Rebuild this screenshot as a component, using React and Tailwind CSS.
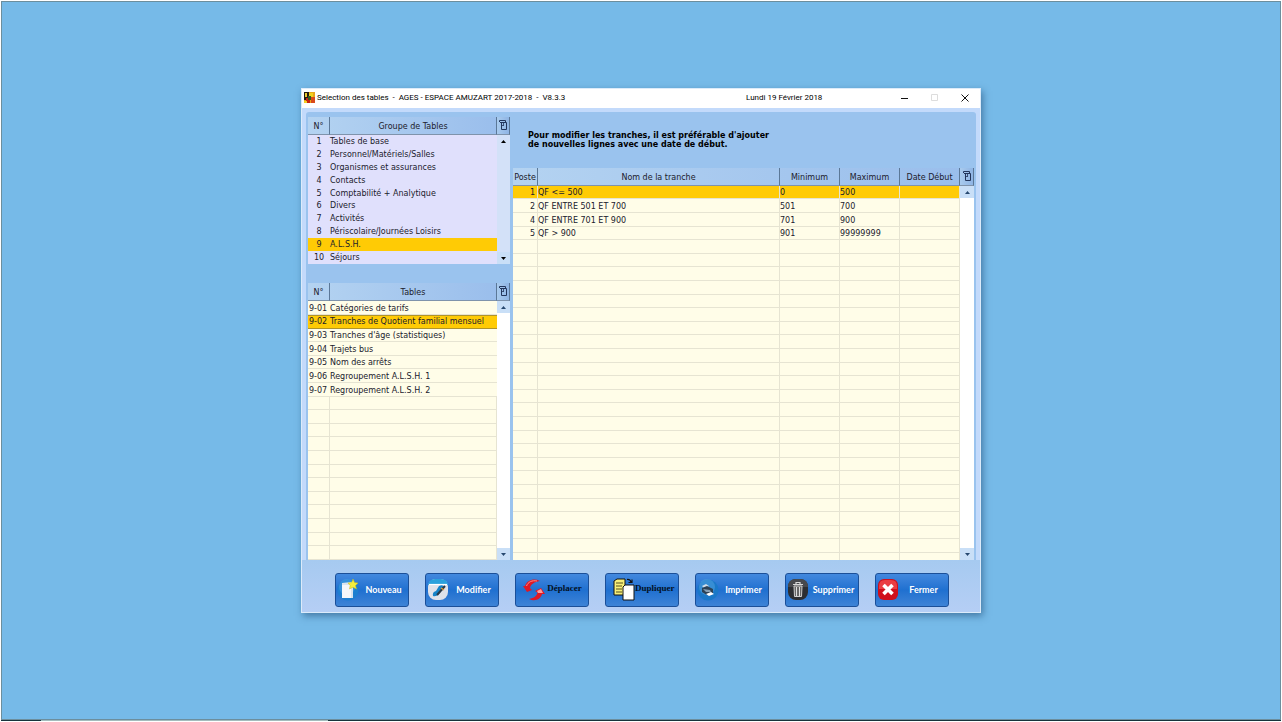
import React from "react";

const groups = [
  ["1", "Tables de base"],
  ["2", "Personnel/Matériels/Salles"],
  ["3", "Organismes et assurances"],
  ["4", "Contacts"],
  ["5", "Comptabilité + Analytique"],
  ["6", "Divers"],
  ["7", "Activités"],
  ["8", "Périscolaire/Journées Loisirs"],
  ["9", "A.L.S.H."],
  ["10", "Séjours"],
];

const tables = [
  ["9-01", "Catégories de tarifs"],
  ["9-02", "Tranches de Quotient familial mensuel"],
  ["9-03", "Tranches d'âge (statistiques)"],
  ["9-04", "Trajets bus"],
  ["9-05", "Nom des arrêts"],
  ["9-06", "Regroupement A.L.S.H. 1"],
  ["9-07", "Regroupement A.L.S.H. 2"],
];

const brackets = [
  ["1", "QF <= 500", "0", "500"],
  ["2", "QF ENTRE 501 ET 700", "501", "700"],
  ["4", "QF ENTRE 701 ET 900", "701", "900"],
  ["5", "QF > 900", "901", "99999999"],
];

const padRows = (rows, count) => [...rows, ...Array(count - rows.length).fill([])];

// Row heights cycle between 13 and 14 pixels.
const rowHeights = ["h-[13px]", "h-[14px]", "h-[14px]", "h-[13px]", "h-[14px]"];

const headRow = "h-[18px] bg-linear-to-r from-[#b4d3f1] to-[#9abeec]";
const headCell =
  "border-r border-r-[#5b7898] border-b border-b-[#7f93ab] p-0 pt-0.5 text-center font-normal";

function AppLogo() {
  return (
    <svg className="h-[11px] w-[11px]" viewBox="0 0 11 11" aria-hidden="true">
      <rect width="11" height="11" fill="#e8a51c" />
      <rect width="5" height="8" fill="#221a10" />
      <rect x="1" y="1" width="2" height="4" fill="#e8c832" />
      <rect x="5" y="1" width="4" height="5" fill="#f0d21e" />
      <rect x="2" y="6" width="4" height="5" fill="#c82414" />
      <rect x="7" y="5" width="4" height="6" fill="#d94a1a" />
      <rect x="4" y="4" width="3" height="4" fill="#3a5a20" />
      <rect y="9" width="3" height="2" fill="#f3cf24" />
    </svg>
  );
}

function ColumnsIcon() {
  return (
    <svg className="h-[11px] w-2" viewBox="0 0 8 11" fill="none" stroke="#23365c" aria-hidden="true">
      <path d="M.5 2V.5H6.5V2M1 2.5H7.5V9.5H2.5V2.5" />
      <path d="M4.5 3V5.5M3 5.5H5" strokeWidth=".8" />
    </svg>
  );
}

function Arrow({ down, dark }) {
  return (
    <button
      type="button"
      aria-label={down ? "Défiler vers le bas" : "Défiler vers le haut"}
      className={`flex h-3 w-full shrink-0 items-center justify-center ${dark && !down ? "" : "bg-[#c9dff7]"}`}
    >
      <svg className="h-[3px] w-[5px]" viewBox="0 0 5 3" aria-hidden="true">
        <path d={down ? "M0 0H5L2.5 3Z" : "M0 3H5L2.5 0Z"} fill={dark ? "#000" : "#27486f"} />
      </svg>
    </button>
  );
}

function ScrollRail({ width, tint }) {
  return (
    <div className={`flex shrink-0 flex-col ${width}`}>
      <button
        type="button"
        aria-label="Choisir les colonnes"
        className="flex h-[18px] shrink-0 items-center justify-center border-r border-b border-r-[#5b7898] border-b-[#7f93ab] bg-linear-to-r from-[#a9cbee] to-[#8fb4e4]"
      >
        <ColumnsIcon />
      </button>
      <div className={`flex grow flex-col justify-between ${tint ? "bg-[#d3e1f8]" : "bg-white"}`}>
        <Arrow dark={tint} />
        <Arrow down dark={tint} />
      </div>
    </div>
  );
}

function GroupTable() {
  return (
    <section className="flex bg-[#e0e0fc]">
      <table className="grow table-fixed border-separate border-spacing-0 leading-3">
        <colgroup>
          <col className="w-[22px]" />
          <col />
        </colgroup>
        <thead>
          <tr className={headRow}>
            <th className={headCell}>N°</th>
            <th className={headCell}>Groupe de Tables</th>
          </tr>
        </thead>
        <tbody>
          {groups.map(([id, name], i) => (
            <tr key={id} className={`${i % 6 === 5 ? "h-3" : "h-[13px]"} ${id === "9" ? "bg-[#ffcb05]" : ""}`}>
              <td className="p-0 text-center">{id}</td>
              <td className="p-0">{name}</td>
            </tr>
          ))}
        </tbody>
      </table>
      <ScrollRail width="w-[13px]" tint />
    </section>
  );
}

function TableList() {
  return (
    <section className="flex grow bg-[#fffde8]">
      <div className="grow">
        <table className="w-full table-fixed border-separate border-spacing-0 leading-[10px]">
          <colgroup>
            <col className="w-[22px]" />
            <col />
          </colgroup>
          <thead>
            <tr className={headRow}>
              <th className={headCell}>N°</th>
              <th className={headCell}>Tables</th>
            </tr>
          </thead>
          <tbody>
            {padRows(tables, 19).map(([id, name], i) => {
              const line =
                id === "9-02"
                  ? "border-y border-[#b0942a]"
                  : `border-b border-[#e6e4d2] pt-0.5 ${id ? "" : "border-r"}`;
              return (
                <tr key={i} className={`${rowHeights[(i + 1) % 5]} ${id === "9-02" ? "bg-[#ffcb05]" : ""}`}>
                  <td className={`p-0 pl-px ${line}`}>{id}</td>
                  <td className={`p-0 ${line}`}>{name}</td>
                </tr>
              );
            })}
          </tbody>
        </table>
      </div>
      <ScrollRail width="w-[13px]" />
    </section>
  );
}

function BracketTable() {
  const cell = "border-r border-b border-[#e6e4d2] p-0 pt-0.5";
  return (
    <section className="flex grow bg-[#fffde8]">
      <div className="grow">
        <table className="w-full table-fixed border-separate border-spacing-0 leading-[10px]">
          <colgroup>
            <col className="w-[25px]" />
            <col />
            <col className="w-[60px]" />
            <col className="w-[60px]" />
            <col className="w-[60px]" />
          </colgroup>
          <thead>
            <tr className={headRow}>
              {["Poste", "Nom de la tranche", "Minimum", "Maximum", "Date Début"].map((label) => (
                <th key={label} className={headCell}>{label}</th>
              ))}
            </tr>
          </thead>
          <tbody>
            {padRows(brackets, 27).map(([id, name, min, max], i) => (
              <tr key={i} className={`${rowHeights[i % 5]} ${i === 0 ? "bg-[#ffcb05]" : ""}`}>
                <td className={`${cell} pr-0.5 text-right`}>{id}</td>
                <td className={cell}>{name}</td>
                <td className={cell}>{min}</td>
                <td className={cell}>{max}</td>
                <td className={cell} />
              </tr>
            ))}
            <tr className="h-[7px]" aria-hidden="true">
              {[0, 1, 2, 3, 4].map((n) => (
                <td key={n} className="border-r border-[#e6e4d2] p-0" />
              ))}
            </tr>
          </tbody>
        </table>
      </div>
      <ScrollRail width="w-[14px]" />
    </section>
  );
}

const icons = {
  new: (
    <>
      <circle cx="11" cy="12" r="10.5" fill="#1d7fd0" />
      <circle cx="10" cy="9" r="8" fill="#4ba3e6" opacity=".5" />
      <path d="M5 5L16 4V20H5Z" fill="#f4f7fa" />
      <path d="M5 5H16V20H14V7H5Z" fill="#d9e4ef" />
      <path d="M16 1L17.6 4.6L21 5L18.5 7.5L19.5 11L16 9.2L12.5 11L13.2 7.5L11 5L14.6 4.6Z" fill="#f5ee3c" stroke="#c9b91a" strokeWidth=".5" />
    </>
  ),
  edit: (
    <>
      <rect x="1" y="1" width="20" height="21" rx="8" fill="#dfe2ea" />
      <path d="M1 7Q2 1 8 1H14Q20 1 21 7Z" fill="#2ba1dc" />
      <path d="M2 6.5H20" stroke="#fff" strokeWidth="1.2" />
      <path d="M6 18Q5 14 9 13L12 8Q16 6 17 9L12 16Q9 19 6 18Z" fill="#1683c8" />
      <path d="M10 17L18 8" stroke="#2b3946" strokeWidth="2" />
      <path d="M14 10L17 12" stroke="#e9a23a" strokeWidth="1.2" />
    </>
  ),
  move: (
    <>
      <path d="M17 3C11 0 4 2 2 8L0 8L4 14L9 12L7 10C8 6 11 4 17 3Z" fill="#e01824" />
      <path d="M14 3C9 2 5 4 3.5 8" fill="none" stroke="#ff8d88" />
      <path d="M6 21C12 24 18 21 19 16L22 16L18 10L12 13L14.5 14.5C14 18 11 20 6 21Z" fill="#e01824" />
      <path d="M14 13L18 11L20 15L15 15Z" fill="#ff9c98" />
    </>
  ),
  copy: (
    <>
      <path d="M1 3L4 1H12V17H1Z" fill="#f7ef78" stroke="#111" />
      <path d="M3 5H10M3 8H9M3 11H9M3 14H9" stroke="#55501e" />
      <path d="M10 9L12 7H21V22H10Z" fill="#fff" stroke="#111" />
      <path d="M14 1.5Q17 1 18 4M15.5 4.5H19V1.5" fill="none" stroke="#111" strokeWidth="1.2" />
    </>
  ),
  print: (
    <>
      <circle cx="11" cy="12" r="10.5" fill="#1a78c8" />
      <circle cx="10" cy="9" r="8" fill="#54a4e0" opacity=".5" />
      <path d="M5 8L9 6L12 8L8 11Z" fill="#cfdde9" />
      <path d="M5 10L10 8L16 11V15L10 17L5 14Z" fill="#2c4256" />
      <path d="M6 11L13 12L14 14L9 14Z" fill="#86a0b4" />
      <path d="M9 16L14 14L17 16L12 18Z" fill="#fff" />
    </>
  ),
  trash: (
    <>
      <rect x="1" y="1" width="20" height="21" rx="8" fill="#2c2e32" />
      <path d="M1 9Q1 1 9 1H13Q21 1 21 9Z" fill="#47494d" />
      <path d="M9 6V4.5H13V6M6 6.5H16" fill="none" stroke="#d8d8d8" strokeWidth="1.2" />
      <path d="M7 8H15L14.5 18.5H7.5Z" fill="#666" stroke="#cfcfcf" />
      <path d="M9.5 9V18M12.5 9V18" stroke="#dedede" />
    </>
  ),
  close: (
    <>
      <rect x="1" y="1" width="20" height="21" rx="6" fill="#d0101c" />
      <path d="M2 11V8Q2 2 8 2H14Q20 2 20 8V11Z" fill="#ea3d42" />
      <path d="M6.5 7L15.5 16M15.5 7L6.5 16" stroke="#fff" strokeWidth="3.6" />
    </>
  ),
};

const actions = [
  ["Nouveau", "new"],
  ["Modifier", "edit"],
  ["Déplacer", "move"],
  ["Dupliquer", "copy"],
  ["Imprimer", "print"],
  ["Supprimer", "trash"],
  ["Fermer", "close"],
];

function ActionButton({ label, icon }) {
  const serif = icon === "move" || icon === "copy";
  const font = serif
    ? "pr-1 pb-0.5 font-['Liberation_Serif',serif] text-[9px] text-[#04101f]"
    : "font-['Lato',sans-serif] text-[9px] text-white";
  return (
    <button
      type="button"
      className={`flex h-[34px] w-[74px] items-center rounded-[3px] border border-[#1b4f98] bg-linear-to-b from-[#4288de] via-[#1f70d0] to-[#3d83d6] ${serif ? "pl-[7px]" : "pl-px"}`}
    >
      <svg className="h-6 w-[22px] shrink-0" viewBox="0 0 22 24" aria-hidden="true">
        {icons[icon]}
      </svg>
      <span className={`grow text-center font-bold ${font}`}>{label}</span>
    </button>
  );
}

export default function App() {
  return (
    <div className="min-h-screen bg-white font-['DejaVu_Sans',sans-serif] text-[8px] text-[#20202c]">
      <div className="flex min-h-screen flex-col px-px pt-px pb-px">
        <main className="flex grow flex-col items-center border border-[#6c8e9d] bg-[#76bae8] pt-[86px]">
          <div className="flex w-[53%] min-w-[680px] flex-col border border-[#dcebfa] bg-[#c3dafb] shadow-[2px_3px_7px_rgba(20,60,100,0.5)]">
            <header className="flex h-[19px] items-center bg-white pb-0.5 pl-0.5 font-['Roboto',sans-serif] text-[8px] text-black">
              <AppLogo />
              <h1 className="w-[431px] pl-0.5 whitespace-pre">Selection des tables  -  AGES - ESPACE AMUZART 2017-2018  -  V8.3.3</h1>
              <span className="grow">Lundi 19 Février 2018</span>
              <div className="flex items-center">
                <button type="button" aria-label="Réduire" className="flex w-[30px] justify-center">
                  <svg className="h-2 w-2" viewBox="0 0 8 8" stroke="#111"><path d="M0 4.5H7" /></svg>
                </button>
                <button type="button" aria-label="Agrandir" disabled className="flex w-[30px] justify-center">
                  <svg className="h-2 w-2" viewBox="0 0 8 8" fill="none" stroke="#ddd"><path d="M.5 .5H6.5V6.5H.5Z" /></svg>
                </button>
                <button type="button" aria-label="Fermer la fenêtre" className="flex w-[30px] justify-center">
                  <svg className="h-2 w-2" viewBox="0 0 8 8" stroke="#111"><path d="M.5 .5L7.5 7.5M7.5 .5L.5 7.5" /></svg>
                </button>
              </div>
            </header>
            <div className="mx-1 mt-1 flex gap-[3px] rounded-t-[3px] bg-[#9ac3ee] px-0.5 pt-[5px]">
              <div className="flex w-[202px] shrink-0 flex-col gap-[19px]">
                <GroupTable />
                <TableList />
              </div>
              <div className="flex grow flex-col">
                <p className="h-[51px] pt-[14px] pl-[15px] text-[8px] leading-[9px] font-bold text-black">
                  Pour modifier les tranches, il est préférable d'ajouter
                  <br />
                  de nouvelles lignes avec une date de début.
                </p>
                <BracketTable />
              </div>
            </div>
            <footer className="flex justify-center gap-4 bg-linear-to-b from-[#a6caf0] to-[#b5cef5] pt-[13px] pb-[5px] pl-0.5">
              {actions.map(([label, icon]) => (
                <ActionButton key={icon} label={label} icon={icon} />
              ))}
            </footer>
          </div>
        </main>
        <div className="flex h-px bg-[#17343c]">
          <div className="ml-10 w-[287px] bg-[#a3bcbd]" />
        </div>
      </div>
    </div>
  );
}
